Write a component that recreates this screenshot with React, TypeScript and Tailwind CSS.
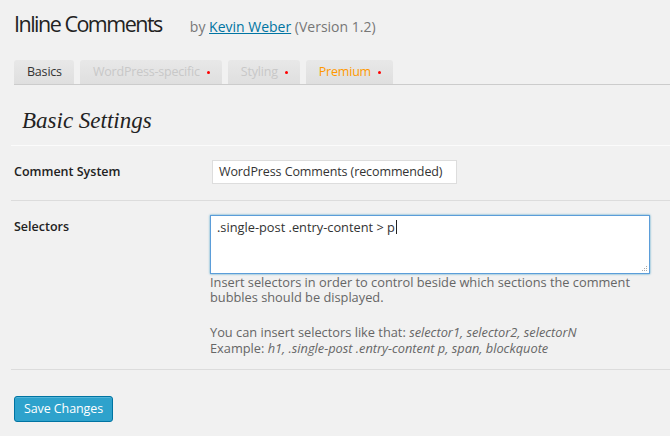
import React from 'react';

const tabs = [
  { label: 'Basics', dot: false, color: 'text-[#333]' },
  { label: 'WordPress-specific', dot: true, color: 'text-[#c8c8c8]' },
  { label: 'Styling', dot: true, color: 'text-[#c8c8c8]' },
  { label: 'Premium', dot: true, color: 'text-[#ff9900]' },
];

export default function App() {
  return (
    <div className="min-h-[436px] w-[670px] overflow-hidden bg-[#f1f1f1] font-['Open_Sans',sans-serif] text-[13px] text-[#444]">
      {/* Header */}
      <div className="flex items-baseline pl-[14px] pt-[9px]">
        <h2 className="text-[21.5px] font-normal leading-[30px] tracking-[-1.5px] text-[#222]">Inline Comments</h2>
        <span className="ml-[28px] text-[14px] text-[#777]">
          by <a href="#" className="text-[#0074a2] underline">Kevin Weber</a> (Version 1.2)
        </span>
      </div>

      {/* Tabs */}
      <div className="ml-[14px] mt-[21px] flex h-[25px] items-end gap-[6px] border-b border-[#ccc]">
        {tabs.map((t) => (
          <div
            key={t.label}
            className={`flex h-[24px] items-center rounded-t-[3px] bg-gradient-to-b from-[#e8e8e8] to-[#dfdfdf] pl-[13px] pr-[12px] text-[12.5px] font-normal tracking-[-0.2px] ${t.color}`}
          >
            {t.label}
            {t.dot && <span className="ml-[7px] inline-block h-[3px] w-[3px] rounded-full bg-[#f00]" />}
          </div>
        ))}
      </div>

      {/* Section title */}
      <h3 className="pl-[22px] pt-[21px] font-['Liberation_Serif',serif] text-[23px] italic leading-[30px] text-[#222]">
        Basic Settings
      </h3>
      <div className="ml-[11px] mt-[9px] border-t border-[#fbfbfb]" />

      {/* Comment system */}
      <div className="ml-[11px] flex border-b border-[#dcdcdc] pb-[16px] pt-[14px]">
        <div className="w-[200px] pl-[3px] pt-[3px] text-[12.5px] font-semibold text-[#222]">Comment System</div>
        <div className="ml-[1px] flex h-[24px] w-[245px] items-center whitespace-nowrap border border-[#ddd] bg-white px-[6px] text-[12.5px] tracking-[-0.1px] text-[#333]">
          WordPress Comments (recommended)
        </div>
      </div>

      {/* Selectors */}
      <div className="ml-[11px] flex border-b border-[#dcdcdc] pb-[13px] pt-[14px]">
        <div className="w-[200px] pl-[3px] pt-[3px] text-[12.5px] font-semibold text-[#222]">Selectors</div>
        <div className="flex-1 pr-[20px] text-[12.8px]">
          <div className="relative h-[59px] w-[440px] border border-[#5b9dd9] bg-white px-[6px] pt-[2px] text-[#333] shadow-[0_0_2px_rgba(30,140,190,0.8)]">
            .single-post .entry-content &gt; p<span className="ml-[1px] inline-block h-[14px] w-px translate-y-[2px] bg-[#222]" />
            <svg className="absolute bottom-[1px] right-[1px]" width="6" height="6" viewBox="0 0 6 6">
              <rect x="4" y="0" width="1" height="1" fill="#aaa" />
              <rect x="2" y="2" width="1" height="1" fill="#aaa" />
              <rect x="4" y="2" width="1" height="1" fill="#aaa" />
              <rect x="0" y="4" width="1" height="1" fill="#aaa" />
              <rect x="2" y="4" width="1" height="1" fill="#aaa" />
              <rect x="4" y="4" width="1" height="1" fill="#aaa" />
            </svg>
          </div>
          <p className="mt-[1px] w-[440px] leading-[15px] text-[#666]">
            Insert selectors in order to control beside which sections the comment bubbles should be displayed.
          </p>
          <p className="mt-[19px] leading-[16px] text-[#666]">
            You can insert selectors like that: <i>selector1, selector2, selectorN</i>
            <br />
            Example: <i>h1, .single-post .entry-content p, span, blockquote</i>
          </p>
        </div>
      </div>

      {/* Save */}
      <div className="pl-[14px] pt-[26px]">
        <button className="box-border h-[26px] rounded-[3px] border border-[#0074a2] bg-[#2ea2cc] px-[9px] text-[12.5px] leading-[24px] tracking-[-0.1px] text-white shadow-[inset_0_1px_0_rgba(120,200,230,0.5)]">
          Save Changes
        </button>
      </div>
    </div>
  );
}
